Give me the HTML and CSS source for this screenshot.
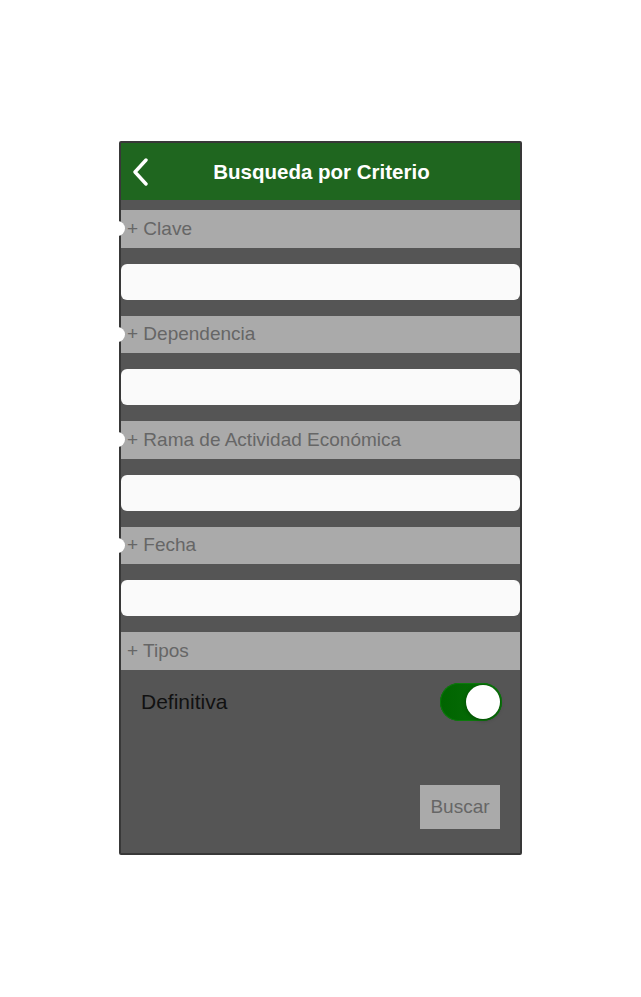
FILE: index.html
```html
<!DOCTYPE html>
<html lang="es">

<head>
    <meta charset="UTF-8">
    <title>Busqueda por Criterio</title>
    <link rel="stylesheet" href="styles.css">
</head>

<body>
    <div class="phone">
        <div class="topbar">
            <span class="back">
                <svg width="18" height="28" viewBox="0 0 18 28">
                    <path d="M15 2 L4 14 L15 26" fill="none" stroke="#fff" stroke-width="3.4" stroke-linecap="round" stroke-linejoin="round"/>
                </svg>
            </span>
            <span class="title">Busqueda por Criterio</span>
        </div>
        <div class="content">
            <div class="section-head"><span class="dot"></span>+ Clave</div>
            <div class="field"></div>
            <div class="section-head"><span class="dot"></span>+ Dependencia</div>
            <div class="field"></div>
            <div class="section-head"><span class="dot"></span>+ Rama de Actividad Económica</div>
            <div class="field"></div>
            <div class="section-head"><span class="dot"></span>+ Fecha</div>
            <div class="field"></div>
            <div class="section-head">+ Tipos</div>
            <div class="option">
                <span class="option-label">Definitiva</span>
                <span class="switch"><span class="knob"></span></span>
            </div>
            <div class="actions">
                <button class="search">Buscar</button>
            </div>
        </div>
    </div>
</body>

</html>
```

FILE: styles.css
```css
body {
    margin: 0;
    background-color: #fff;
    font-family: "Liberation Sans", Arial, sans-serif;
}

.phone {
    width: 399px;
    height: 710px;
    margin: 141px auto 0;
    border: 2px solid #383838;
    border-radius: 2px;
    background-color: #555;
}

.topbar {
    position: relative;
    height: 57px;
    display: flex;
    align-items: center;
    justify-content: center;
    background-color: #1f661f;
}

.back {
    position: absolute;
    left: 10px;
    top: 15px;
    display: flex;
}

.title {
    color: #fff;
    font-size: 20.5px;
    font-weight: bold;
    margin-left: 2px;
}

.content {
    padding-top: 10px;
}

.section-head {
    position: relative;
    height: 37.5px;
    display: flex;
    align-items: center;
    padding-left: 6px;
    background-color: #aaa;
    color: #666;
    font-size: 19px;
}

.dot {
    position: absolute;
    left: -11px;
    top: 11px;
    width: 15px;
    height: 15px;
    border-radius: 50%;
    background-color: #fff;
}

.field {
    height: 36px;
    margin: 16px 0;
    border-radius: 6px;
    background-color: #fafafa;
}

.option {
    display: flex;
    align-items: center;
    justify-content: space-between;
    height: 64px;
    padding: 0 18px 0 20px;
}

.option-label {
    color: #111;
    font-size: 21px;
}

.switch {
    position: relative;
    width: 62px;
    height: 38px;
    border-radius: 19px;
    background: linear-gradient(to right, #006400, #0a700a);
    box-shadow: inset 0 0 0 1px #0c7a0c;
}

.knob {
    position: absolute;
    right: 2px;
    top: 2px;
    width: 34px;
    height: 34px;
    border-radius: 50%;
    background-color: #fff;
    box-shadow: 0 1px 4px rgba(0, 0, 0, 0.35);
}

.actions {
    display: flex;
    justify-content: flex-end;
    padding: 51px 20px 0 0;
}

.search {
    width: 80px;
    height: 44px;
    border: none;
    background-color: #aaa;
    color: #666;
    font-family: "Liberation Sans", Arial, sans-serif;
    font-size: 19px;
}
```
